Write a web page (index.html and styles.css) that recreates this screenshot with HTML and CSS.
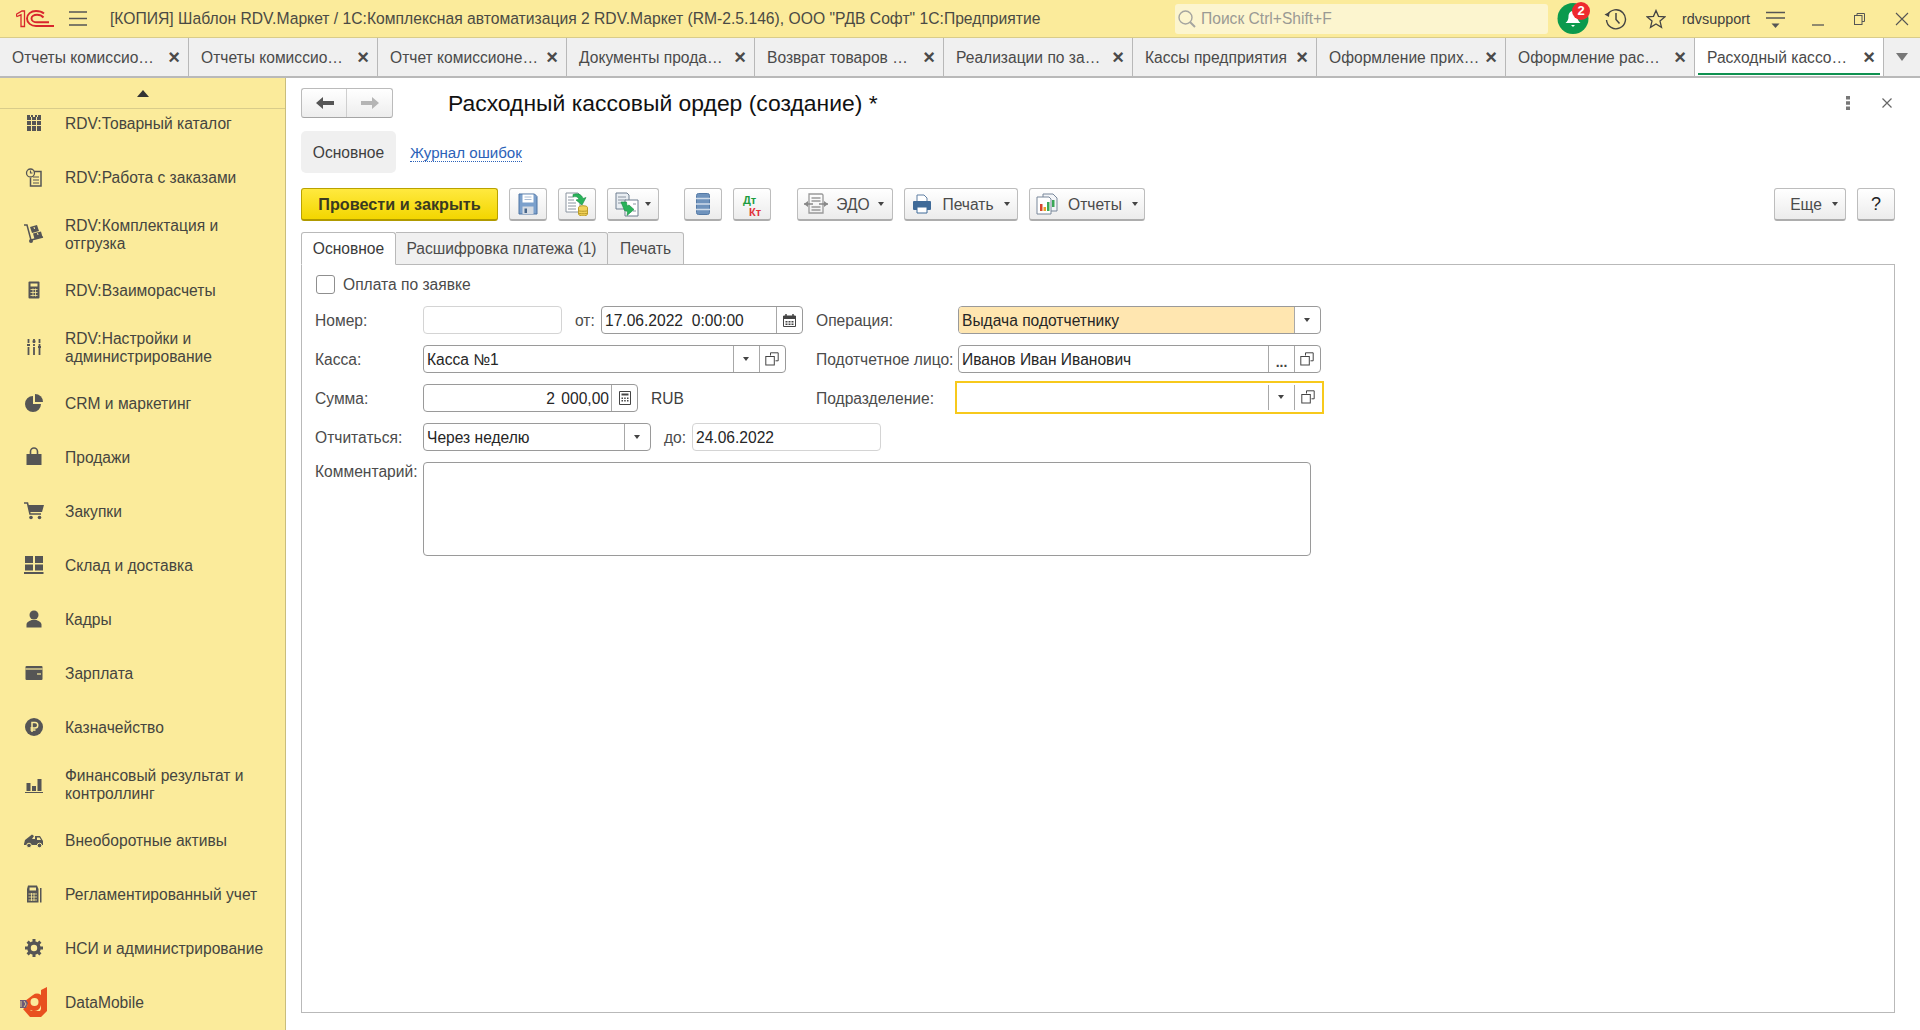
FILE: index.html
```html
<!DOCTYPE html>
<html lang="ru">
<head>
<meta charset="utf-8">
<title>Расходный кассовый ордер</title>
<link rel="stylesheet" href="styles.css">
</head>
<body>
<svg class="defs" width="0" height="0">
  <symbol id="open" viewBox="0 0 14 14"><path d="M5.500 3.500V.8h7.700v8h-2.700" fill="none" stroke="#444"/><rect x=".8" y="4.500" width="8.500" height="8.500" fill="none" stroke="#444"/></symbol>
</svg>
<header class="topbar">
  <svg class="logo" width="38" height="18" viewBox="0 0 38 18"><path d="M0 4.500L6 1h2.500v15.500H5V4.800L1 6.500z" fill="none" stroke="#d8262c" stroke-width="1.300"/><path d="M28 3.500C26 1.800 23 1 20 1c-5 0-9 3.200-9 7.500S15 16 20 16h18" fill="none" stroke="#d8262c" stroke-width="1.900"/><path d="M27.500 7.500C26 5.800 23.500 4.800 21 4.800c-3 0-5.500 1.600-5.500 3.700s2.500 3.800 5.500 3.800h12" fill="none" stroke="#d8262c" stroke-width="1.900"/></svg>
  <svg class="burger" width="18" height="15" viewBox="0 0 18 15"><path d="M0 1h18M0 7.500h18M0 14h18" stroke="#555" stroke-width="1.300"/></svg>
  <div class="apptitle">[КОПИЯ] Шаблон RDV.Маркет / 1С:Комплексная автоматизация 2 RDV.Маркет (RM-2.5.146), ООО "РДВ Софт" 1С:Предприятие</div>
  <div class="search">
    <svg width="20" height="20" viewBox="0 0 20 20"><circle cx="8.500" cy="8.500" r="6.500" fill="none" stroke="#a5a5a0" stroke-width="1.400"/><path d="M13 13l5 5" stroke="#a5a5a0" stroke-width="2"/></svg>
    <span>Поиск Ctrl+Shift+F</span>
  </div>
  <div class="bell">
    <svg width="32" height="31" viewBox="0 0 32 31"><circle cx="16" cy="15.500" r="15.500" fill="#0b9a4d"/><path d="M16 8c-3 0-4.500 2.500-4.500 5.500 0 3-1 5-3 6.500h15c-2-1.500-3-3.500-3-6.500C20.500 10.500 19 8 16 8z" fill="#fff"/><path d="M14 22h4l-2 2z" fill="#fff"/></svg>
    <span class="badge">2</span>
  </div>
  <svg class="tool-history" width="24" height="22" viewBox="0 0 24 22"><path d="M4.500 7A9.500 9.500 0 1 1 3.500 12" fill="none" stroke="#444" stroke-width="1.400"/><path d="M1.500 6.500l4.500 2.500.5-5z" fill="#444"/><path d="M13 5v6.500l3.500 4" fill="none" stroke="#444" stroke-width="1.500"/></svg>
  <svg class="tool-star" width="20" height="20" viewBox="0 0 20 20"><path d="M10 1.500l2.500 5.800 6.300.6-4.800 4.200 1.500 6.200L10 15l-5.500 3.300L6 12.100 1.200 7.900l6.300-.6z" fill="none" stroke="#444" stroke-width="1.300"/></svg>
  <div class="username">rdvsupport</div>
  <svg class="tool-funcs" width="19" height="19" viewBox="0 0 19 19"><path d="M0 1.500h19M0 7h19" stroke="#555" stroke-width="1.300"/><path d="M5.500 12.500h8l-4 4.500z" fill="#555"/></svg>
  <div class="winctl">
    <svg width="12" height="12" viewBox="0 0 12 12"><path d="M0 11h12" stroke="#555" stroke-width="1.300"/></svg>
    <svg width="11" height="12" viewBox="0 0 11 12"><rect x=".5" y="2.500" width="7.500" height="9" fill="none" stroke="#555"/><path d="M3 2.500V.5h7.500v8H8" fill="none" stroke="#555"/></svg>
    <svg width="14" height="14" viewBox="0 0 14 14"><path d="M1 1l12 12M13 1L1 13" stroke="#555" stroke-width="1.100"/></svg>
  </div>
</header>
<nav class="tabstrip">
  <div class="wtab"><span>Отчеты комиссио…</span><i>×</i></div>
  <div class="wtab"><span>Отчеты комиссио…</span><i>×</i></div>
  <div class="wtab"><span>Отчет комиссионе…</span><i>×</i></div>
  <div class="wtab wtab-short"><span>Документы прода…</span><i>×</i></div>
  <div class="wtab"><span>Возврат товаров …</span><i>×</i></div>
  <div class="wtab"><span>Реализации по за…</span><i>×</i></div>
  <div class="wtab wtab-narrow"><span>Кассы предприятия</span><i>×</i></div>
  <div class="wtab"><span>Оформление прих…</span><i>×</i></div>
  <div class="wtab"><span>Оформление рас…</span><i>×</i></div>
  <div class="wtab wtab-active"><span>Расходный кассо…</span><i>×</i></div>
  <div class="tabmore"><b class="more-arrow"></b></div>
</nav>
<div class="main">
  <aside class="sidebar">
    <div class="side-up"><b class="up-arrow"></b></div>
    <div class="side-scroll">
      <ul class="side-list">
        <li class="side-item"><svg viewBox="0 0 20 20" width="20" height="20"><path d="M3 2h3v2h1V2h2v2h2V2h2v2h1V2h3v16H3z" fill="#555"/><path d="M3 7.500h14M3 12.500h14M7.500 4v14M12.500 4v14" stroke="#fbeb9b" stroke-width="1"/></svg><span>RDV:Товарный каталог</span></li>
        <li class="side-item"><svg viewBox="0 0 20 20" width="20" height="20"><path d="M7 4.500h10v14.500H6.500v-8" fill="none" stroke="#555" stroke-width="1.500"/><circle cx="6.500" cy="6" r="4" fill="#fbeb9b" stroke="#555" stroke-width="1.300"/><path d="M6.500 3.500V6h2M9 10h6M9 13h6M9 16h6" fill="none" stroke="#555" stroke-width="1.200"/></svg><span>RDV:Работа с заказами</span></li>
        <li class="side-item"><svg viewBox="0 0 20 20" width="20" height="20"><path d="M0 1h3l4 15 12-3" fill="none" stroke="#555" stroke-width="1.500"/><circle cx="7" cy="17" r="2" fill="#555"/><path d="M6 3l7-2 2 6-7 2zM9 9.500l8-2 1.500 5.500-8 2z" fill="#555"/><path d="M10 3l.5 2M13.500 9l.5 2" stroke="#fbeb9b"/></svg><span>RDV:Комплектация и<br>отгрузка</span></li>
        <li class="side-item"><svg viewBox="0 0 20 20" width="20" height="20"><path d="M4.500 2.500q0-1 1-1h9q1 0 1 1v15q0 1-1 1h-9q-1 0-1-1z" fill="#555"/><path d="M6.500 3.500h7v3h-7z" fill="#fbeb9b"/><path d="M6.500 9.500h7M6.500 12.500h7M6.500 15.500h7M9 8.500v8M11.500 8.500v8" stroke="#fbeb9b" stroke-width=".8"/></svg><span>RDV:Взаиморасчеты</span></li>
        <li class="side-item"><svg viewBox="0 0 20 20" width="20" height="20"><path d="M4.500 2v16M10 2v16M15.500 2v16" stroke="#555" stroke-width="1.800" stroke-dasharray="4 1 2 1 10"/><path d="M3 8h3M8.500 4.500h3M14 10h3" stroke="#555" stroke-width="2"/></svg><span>RDV:Настройки и<br>администрирование</span></li>
        <li class="side-item"><svg viewBox="0 0 20 20" width="20" height="20"><path d="M9 3a8 8 0 1 0 8 8H9z" fill="#555"/><path d="M11 1a8 8 0 0 1 8 8h-8z" fill="#555"/></svg><span>CRM и маркетинг</span></li>
        <li class="side-item"><svg viewBox="0 0 20 20" width="20" height="20"><path d="M2.500 7h15v11h-15z" fill="#555"/><path d="M6.500 7V4.500a3.500 3.500 0 0 1 7 0V7" fill="none" stroke="#555" stroke-width="1.600"/></svg><span>Продажи</span></li>
        <li class="side-item"><svg viewBox="0 0 20 20" width="20" height="20"><path d="M0 2h3.500l2.500 11h11" fill="none" stroke="#555" stroke-width="1.600"/><path d="M4 4h16l-2 7H5.500z" fill="#555"/><circle cx="7" cy="16.500" r="1.800" fill="#555"/><circle cx="15.500" cy="16.500" r="1.800" fill="#555"/></svg><span>Закупки</span></li>
        <li class="side-item"><svg viewBox="0 0 20 20" width="20" height="20"><path d="M1 1h8v7H1zM11 1h8v7h-8zM1 9.500h8v6H1zM11 9.500h8v6h-8zM0 17h19.500v2H0z" fill="#555"/></svg><span>Склад и доставка</span></li>
        <li class="side-item"><svg viewBox="0 0 20 20" width="20" height="20"><circle cx="10" cy="6" r="4.500" fill="#555"/><path d="M2.500 18.500v-3c0-2.500 3-3.500 5-4.500h5c2 1 5 2 5 4.500v3z" fill="#555"/></svg><span>Кадры</span></li>
        <li class="side-item"><svg viewBox="0 0 20 20" width="20" height="20"><path d="M1.500 4q0-1 1-1h15q1 0 1 1v12q0 1-1 1h-15q-1 0-1-1z" fill="#555"/><path d="M1.500 6h17" stroke="#fbeb9b" stroke-width="1.200"/><path d="M13 11h4" stroke="#fbeb9b" stroke-width="1.200"/></svg><span>Зарплата</span></li>
        <li class="side-item"><svg viewBox="0 0 20 20" width="20" height="20"><circle cx="10" cy="10" r="9" fill="#555"/><path d="M8 15V5.500h3a2.500 2.500 0 0 1 0 5.500H6.500M6.500 13h5" fill="none" stroke="#fbeb9b" stroke-width="1.500"/></svg><span>Казначейство</span></li>
        <li class="side-item"><svg viewBox="0 0 20 20" width="20" height="20"><path d="M2.500 9h4v8h-4zM8 12h4v5H8zM13.500 5h4v12h-4zM1 18h18v1H1z" fill="#555"/></svg><span>Финансовый результат и<br>контроллинг</span></li>
        <li class="side-item"><svg viewBox="0 0 20 20" width="20" height="20"><path d="M0 14l1-4 7-5.500 2 1.500-2 3h3V6h5l3 5v4H0z" fill="#555"/><circle cx="5" cy="15.500" r="2.300" fill="#555" stroke="#fbeb9b"/><circle cx="15.500" cy="15.500" r="2.300" fill="#555" stroke="#fbeb9b"/><path d="M13 7.500h2.500l1.500 2.500h-4z" fill="#fbeb9b"/></svg><span>Внеоборотные активы</span></li>
        <li class="side-item"><svg viewBox="0 0 20 20" width="20" height="20"><path d="M3 5l1-3.500h9L14.500 5v13.500H3z" fill="#555"/><path d="M16 4h1.500v14.500H16z" fill="#555"/><path d="M5.500 3.500h6.500v3H5.500z" fill="#fbeb9b"/><path d="M4.500 10h8.500M4.500 13h8.500M4.500 16h8.500M7.500 9v8M10 9v8" stroke="#fbeb9b" stroke-width=".8"/></svg><span>Регламентированный учет</span></li>
        <li class="side-item"><svg viewBox="0 0 20 20" width="20" height="20"><circle cx="10" cy="10" r="5" fill="none" stroke="#555" stroke-width="3.600"/><path d="M10 1v4M10 15v4M1 10h4M15 10h4M3.600 3.600l2.800 2.800M13.600 13.600l2.800 2.800M16.400 3.600l-2.800 2.800M6.400 13.600l-2.800 2.800" stroke="#555" stroke-width="3"/></svg><span>НСИ и администрирование</span></li>
        <li class="side-item side-item-logo"><svg viewBox="0 0 30 32" width="30" height="32"><path d="M28 1v24l-6 6H11L4 23l4-3 4 5h9l1-2v-4a7 7 0 0 1-14-2l-2-2 8-6a7 7 0 0 1 8 0V4z" fill="#e8501f"/><circle cx="15.500" cy="16" r="4" fill="#fbeb9b"/><path d="M1 14h6l2 3-2 5H1z" fill="#6c5a78"/><path d="M2 15v6M5 15l2 3-2 3" stroke="#fbeb9b" stroke-width=".8" fill="none"/></svg><span>DataMobile</span></li>
      </ul>
    </div>
  </aside>
  <main class="content">
    <div class="formhead">
      <div class="navbtns">
        <button class="navbtn"><svg width="20" height="14" viewBox="0 0 20 14"><path d="M1 7l7-6v4h11v4H8v4z" fill="#555"/></svg></button>
        <button class="navbtn"><svg width="20" height="14" viewBox="0 0 20 14"><path d="M19 7l-7-6v4H1v4h11v4z" fill="#b5b5b5"/></svg></button>
      </div>
      <h1 class="formtitle">Расходный кассовый ордер (создание) *</h1>
      <svg class="formdots" width="4" height="14" viewBox="0 0 4 14"><path d="M0 0h4v3.500H0zM0 5.200h4v3.500H0zM0 10.500h4V14H0z" fill="#777"/></svg>
      <svg class="formclose" width="10" height="10" viewBox="0 0 10 10"><path d="M.5.500l9 9M9.500.500l-9 9" stroke="#666" stroke-width="1.200"/></svg>
    </div>
    <div class="sections">
      <div class="section section-active">Основное</div>
      <a class="section-link">Журнал ошибок</a>
    </div>
    <div class="toolbar">
      <button class="tb tb-primary">Провести и закрыть</button>
      <button class="tb tb-icon"><svg width="20" height="22" viewBox="0 0 20 22"><path d="M1 1h15.500L19 3.500V21H1z" fill="#7ba0cc" stroke="#4f74a3"/><path d="M4.500 1.500h11v8h-11z" fill="#fff"/><path d="M6.500 4h7M6.500 6.500h7" stroke="#a9bcd4"/><path d="M4.500 13.500h11V21h-11z" fill="#d5dbe3"/><path d="M6.500 15.500H9V20H6.500z" fill="#47668a"/></svg></button>
      <button class="tb tb-icon"><svg width="24" height="24" viewBox="0 0 24 24"><path d="M1 1h12l2 2v17H1z" fill="#fff" stroke="#8a94a0"/><path d="M3 5h5M3 8h6M3 11h8M3 14h8M3 17h8" stroke="#8a94a0"/><path d="M8 2.500c5-2 9 .5 10 4l3-1-4 7.500-6-5 3-.8C13 5 11 4 8 5z" fill="#29b35a" stroke="#178c42" stroke-width=".6"/><ellipse cx="18" cy="15.500" rx="4.500" ry="1.800" fill="#f2d25a" stroke="#b99c2a"/><path d="M13.500 15.500v6.500c0 1 2 2 4.500 2s4.500-1 4.500-2v-6.500" fill="#f2d25a" stroke="#b99c2a"/><path d="M13.500 18.500c0 1 9 1 9 0M13.500 21c0 1 9 1 9 0" fill="none" stroke="#b99c2a"/></svg></button>
      <button class="tb tb-iconmenu"><svg width="24" height="25" viewBox="0 0 24 25"><path d="M1 1h11l2 2v14H1z" fill="#e8edf2" stroke="#6f7f90"/><path d="M3 5h8M3 8h8M3 11h4" stroke="#8a94a0"/><path d="M10 8h13v16H10z" fill="#fff" stroke="#6f7f90"/><path d="M18 12h3M18 19h3" stroke="#8a94a0"/><path d="M6 10h5.500l.5 4 2-1 5 4.500-7 6 .5-4-3-1z" fill="#29b35a" stroke="#178c42" stroke-width=".6"/></svg><b class="caret"></b></button>
      <button class="tb tb-icon tb-gap"><svg width="14" height="22" viewBox="0 0 14 22"><rect x=".5" y=".5" width="13" height="21" rx="2" fill="#6f93bd" stroke="#557aa6"/><path d="M0 5.500h14M0 11h14M0 16.500h14" stroke="#cfdcea" stroke-width="1.300"/></svg></button>
      <button class="tb tb-icon tb-dtkt"><span class="dt">Дт</span><span class="kt">Кт</span></button>
      <button class="tb tb-menu tb-edo"><svg width="24" height="22" viewBox="0 0 24 22"><path d="M5 1h13l1 1v18H5z" fill="none" stroke="#999" stroke-width="1.300"/><path d="M7.500 5h9M7.500 8h9M7.500 14h9M7.500 17h9" stroke="#999" stroke-width="1.300"/><path d="M0 11h9M15 11h9" stroke="#888" stroke-width="1.600"/><path d="M0 11l4-3v6zM24 11l-4-3v6z" fill="#888"/></svg><span>ЭДО</span><b class="caret"></b></button>
      <button class="tb tb-menu tb-print"><svg width="20" height="20" viewBox="0 0 20 20"><path d="M5 1h7l3 3v5H5z" fill="#fff" stroke="#5f7fa3"/><path d="M1 8q0-1 1-1h16q1 0 1 1v7q0 1-1 1h-3v-3H5v3H2q-1 0-1-1z" fill="#3f6a98"/><path d="M5 13h10v6H5z" fill="#fff" stroke="#3f6a98"/></svg><span>Печать</span><b class="caret"></b></button>
      <button class="tb tb-menu tb-reports"><svg width="22" height="22" viewBox="0 0 22 22"><path d="M7 1h10l4 4v13H7z" fill="#f3f5f8" stroke="#78879a"/><path d="M1 4h12l2 2v15H1z" fill="#fff" stroke="#78879a"/><path d="M4 11h2.500v7H4z" fill="#d8452e"/><path d="M7.500 14H10v4H7.500z" fill="#e8a32a"/><path d="M11 9h2.500v9H11z" fill="#3aa757"/><path d="M16 7h2.500v7H16z" fill="#3aa757"/></svg><span>Отчеты</span><b class="caret"></b></button>
      <div class="tb-spacer"></div>
      <button class="tb tb-menu tb-more"><span>Еще</span><b class="caret"></b></button>
      <button class="tb tb-help">?</button>
    </div>
    <div class="formtabs">
      <div class="ftab ftab-active">Основное</div>
      <div class="ftab ftab-pay">Расшифровка платежа (1)</div>
      <div class="ftab ftab-print">Печать</div>
    </div>
    <section class="panel">
      <label class="check"><span class="box"></span><span>Оплата по заявке</span></label>
      <div class="grid3">
        <div class="cell">
          <span class="lab">Номер:</span>
          <div class="field field-plain f-num"></div>
          <span class="lab-in lab-ot">от:</span>
          <div class="field f-date"><div class="val">17.06.2022&nbsp; 0:00:00</div><div class="fbtn"><svg width="13" height="13" viewBox="0 0 13 13"><path d="M.5 2h12v10.500H.5z" fill="none" stroke="#444"/><path d="M.5 2h12v3H.5z" fill="#444"/><path d="M3 0v3M10 0v3" stroke="#444" stroke-width="1.500"/><path d="M2.500 7h2v1.500h-2zM5.500 7h2v1.500h-2zM8.500 7h2v1.500h-2zM2.500 9.500h2V11h-2zM5.500 9.500h2V11h-2zM8.500 9.500h2V11h-2z" fill="#444"/></svg></div></div>
        </div>
        <span class="lab-r">Операция:</span>
        <div class="field f-op"><div class="val">Выдача подотчетнику</div><div class="fbtn"><b class="caret"></b></div></div>

        <div class="cell">
          <span class="lab">Касса:</span>
          <div class="field f-kassa"><div class="val">Касса №1</div><div class="fbtn"><b class="caret"></b></div><div class="fbtn fbtn-open"><svg width="14" height="14"><use href="#open"/></svg></div></div>
        </div>
        <span class="lab-r">Подотчетное лицо:</span>
        <div class="field"><div class="val">Иванов Иван Иванович</div><div class="fbtn fbtn-dots">...</div><div class="fbtn fbtn-open"><svg width="14" height="14"><use href="#open"/></svg></div></div>

        <div class="cell">
          <span class="lab">Сумма:</span>
          <div class="field f-sum"><div class="val val-r">2 000,00</div><div class="fbtn"><svg width="12" height="14" viewBox="0 0 12 14"><path d="M.5.500h11v13H.5z" fill="none" stroke="#444"/><path d="M2.500 2.500h7v2h-7z" fill="#444"/><path d="M2.500 6.500h1.500v1.500H2.500zM5.200 6.500h1.500v1.500H5.200zM8 6.500h1.500v1.500H8zM2.500 9h1.500v1.500H2.500zM5.200 9h1.500v1.500H5.200zM8 9h1.500v1.500H8z" fill="#444"/></svg></div></div>
          <span class="cur">RUB</span>
        </div>
        <span class="lab-r">Подразделение:</span>
        <div class="field f-focus"><div class="val"></div><div class="fbtn"><b class="caret"></b></div><div class="fbtn fbtn-open"><svg width="14" height="14"><use href="#open"/></svg></div></div>
      </div>
      <div class="row row-report">
        <span class="lab">Отчитаться:</span>
        <div class="field f-term"><div class="val">Через неделю</div><div class="fbtn"><b class="caret"></b></div></div>
        <span class="lab-in lab-do">до:</span>
        <div class="field field-plain f-till"><div class="val">24.06.2022</div></div>
      </div>
      <div class="row row-comment">
        <span class="lab">Комментарий:</span>
        <div class="field f-comment"></div>
      </div>
    </section>
  </main>
</div>
</body>
</html>
```

FILE: styles.css
```css
* { box-sizing: border-box; }
html, body { margin: 0; height: 100%; }
body {
  width: 1920px; height: 1030px; overflow: hidden;
  display: flex; flex-direction: column;
  font: 15.6px/18px "Liberation Sans", Arial, sans-serif;
  color: #4b4b4b; background: #fff;
}
.defs { display: none; }
button { font: inherit; color: inherit; padding: 0; }
ul { list-style: none; margin: 0; padding: 0; }

/* top bar */
.topbar {
  height: 38px; flex: none; display: flex; align-items: center;
  background: #fbeb9b; border-bottom: 1px solid #d9cc8a;
}
.logo { margin-left: 16px; }
.burger { margin-left: 15px; }
.apptitle { margin-left: 23px; width: 1065px; color: #4a4a44; white-space: nowrap; font-size: 15.68px; }
.search {
  width: 373px; height: 30px; display: flex; align-items: center; gap: 4px;
  padding-left: 2px; background: #fcf5cf; border-radius: 3px; color: #9a9a94;
}
.bell { position: relative; width: 32px; height: 31px; margin-left: 9px; }
.bell svg { display: block; }
.badge {
  position: absolute; left: 15px; top: -1px; width: 18px; height: 18px; border-radius: 50%;
  background: #ee2a2e; color: #fff; font: bold 13px/18px "Liberation Sans", sans-serif; text-align: center;
}
.tool-history { margin-left: 14px; }
.tool-star { margin-left: 19px; }
.username { margin-left: 16px; font-size: 14.4px; color: #3f3f3f; width: 84px; white-space: nowrap; }
.tool-funcs { margin-top: 4px; }
.winctl { margin-left: 27px; display: flex; align-items: center; gap: 30px; }
.winctl svg:first-child { margin-top: 2px; }

/* window tabs */
.tabstrip {
  height: 40px; flex: none; display: flex;
  background: #f0f0f0; border-bottom: 2px solid #b9b9b9;
}
.wtab {
  width: 189px; display: flex; align-items: center; justify-content: space-between;
  padding: 0 8px 0 12px; border-right: 1px solid #b8b8b8; white-space: nowrap;
  color: #4a4a4a; position: relative;
}
.wtab span { margin-top: 2px; }
.wtab-short { width: 188px; }
.wtab-narrow { width: 184px; }
.wtab i { font: bold 20px/18px "Liberation Sans", sans-serif; color: #4a4a4a; }
.wtab-active { background: #fff; }
.wtab-active::after {
  content: ""; position: absolute; left: 3px; right: 3px; bottom: 1px; height: 2px; background: #0f9150;
}
.tabmore { flex: 1; display: flex; align-items: center; justify-content: center; }
.more-arrow { border: 6px solid transparent; border-top: 8px solid #777; border-bottom: 0; }

/* layout */
.main { flex: 1; display: flex; min-height: 0; }

/* sidebar */
.sidebar {
  width: 286px; flex: none; display: flex; flex-direction: column;
  background: #fbeb9b; border-right: 1px solid #c9bd7d;
}
.side-up {
  height: 31px; flex: none; display: flex; align-items: center; justify-content: center;
  border-bottom: 1px solid #d9cc8a;
}
.up-arrow { border: 6px solid transparent; border-bottom: 7px solid #333; border-top: 0; }
.side-scroll { flex: 1; overflow: hidden; }
.side-list { margin-top: -13px; }
.side-item {
  height: 54px; display: flex; align-items: center; gap: 21px; padding-left: 24px; color: #454540;
}
.side-item span { margin-top: 2px; }
.side-item:nth-child(3), .side-item:nth-child(5), .side-item:nth-child(13) { height: 59px; }
.side-item svg { flex: none; }
.side-item-logo { gap: 16px; padding-left: 19px; }

/* form */
.content { flex: 1; min-width: 0; display: flex; flex-direction: column; padding: 10px 25px 17px 15px; }
.formhead { height: 30px; flex: none; display: flex; align-items: center; }
.navbtns { display: flex; width: 92px; height: 30px; }
.navbtn {
  flex: 1; display: flex; align-items: center; justify-content: center;
  background: linear-gradient(#fff, #ededed); border: 1px solid #bbb; border-bottom-color: #a5a5a5;
}
.navbtn:first-child { border-radius: 3px 0 0 3px; border-right: 0; box-shadow: inset -1px 0 0 #cfcfcf; }
.navbtn:last-child { border-radius: 0 3px 3px 0; border-left: 0; }
.formtitle { margin: 0 0 0 55px; font-size: 22.9px; line-height: 30px; font-weight: normal; color: #111; white-space: nowrap; flex: 1; }
.formdots { margin-right: 32px; }
.formclose { margin-right: 3px; }

.sections { height: 42px; margin-top: 13px; flex: none; display: flex; align-items: center; }
.section { height: 42px; line-height: 44px; background: #f0f0f0; border-radius: 5px; width: 95px; text-align: center; color: #3f3f3f; }
.section-link { margin: 2px 0 0 14px; color: #2c62b8; border-bottom: 1px dotted #2c62b8; line-height: 17px; font-size: 15.1px; }

.toolbar { height: 33px; margin-top: 15px; flex: none; display: flex; }
.tb {
  height: 33px; display: flex; align-items: center; justify-content: center; gap: 8px; flex: none;
  background: linear-gradient(#fff, #ececec); border: 1px solid #bdbdbd; border-bottom: 2px solid #adadad;
  border-radius: 3px; color: #4b4b4b; margin-right: 11px;
}
.tb-primary {
  width: 197px; font-weight: bold; font-size: 16.2px; color: #3a3a20; white-space: nowrap;
  background: linear-gradient(#ffe93f, #f3d600); border: 1px solid #b9a200; border-bottom: 2px solid #b09a00;
}
.tb-icon { width: 38px; }
.tb-iconmenu { width: 52px; gap: 6px; }
.tb-gap { margin-left: 14px; }
.tb-dtkt { display: block; padding: 0; font: bold 11px/11px "Liberation Sans", sans-serif; margin-right: 26px; }
.dt { display: block; color: #1c9c3e; margin: 4px 0 0 9px; text-align: left; }
.kt { display: block; color: #e0323a; margin: 1px 0 0 15px; text-align: left; }
.tb-menu { gap: 10px; }
.tb-menu span { margin-top: 2px; }
.tb-edo { width: 96px; gap: 8px; padding-right: 2px; }
.tb-print { width: 114px; }
.tb-reports { width: 116px; margin-right: 0; }
.tb-spacer { flex: 1; }
.tb-more { width: 72px; padding-left: 8px; }
.tb-help { width: 38px; margin-right: 0; font-size: 18px; font-weight: normal; color: #222; }
.caret { display: inline-block; border: 3.500px solid transparent; border-top: 4px solid #444; border-bottom: 0; }

.formtabs { height: 33px; margin-top: 11px; flex: none; display: flex; position: relative; z-index: 1; margin-bottom: -1px; }
.ftab {
  height: 33px; line-height: 31px; text-align: center; background: #f0f0f0; color: #4b4b4b; white-space: nowrap;
  border: 1px solid #b9b9b9; border-left: 0; border-radius: 0 3px 0 0;
}
.ftab-active { width: 95px; background: #fff; border-left: 1px solid #b9b9b9; border-bottom-color: #fff; border-radius: 3px 3px 0 0; color: #3a3a3a; }
.ftab-pay { width: 212px; }
.ftab-print { width: 76px; }

.panel { flex: 1; min-height: 0; border: 1px solid #b9b9b9; padding: 10px 0 0 14px; }
.check { display: flex; align-items: center; gap: 8px; height: 19px; color: #4b4b4b; }
.box { width: 19px; height: 19px; background: #fff; border: 1px solid #8f8f8f; border-radius: 3px; }
.grid3 { display: grid; grid-template-columns: 500px 142px 363px; grid-auto-rows: 28px; row-gap: 11px; margin-top: 12px; align-items: center; }
.cell { display: flex; align-items: center; }
.lab { width: 108px; margin-left: -1px; flex: none; white-space: nowrap; }
.cell .lab, .row-report .lab { margin-top: 2px; }
.lab-r { white-space: nowrap; margin-top: 2px; }
.lab-in { flex: none; margin-top: 2px; }
.lab-ot { margin-left: 13px; width: 26px; }
.lab-do { margin-left: 13px; width: 28px; }
.cur { margin: 2px 0 0 13px; color: #3f3f3f; }
.field {
  height: 28px; display: flex; background: #fff; border: 1px solid #9a9a9a; border-radius: 4px;
  color: #262626; flex: none;
}
.field-plain { border-color: #d4d4d4; }
.val { flex: 1; min-width: 0; line-height: 28px; padding: 0 3px; white-space: nowrap; }
.val-r { text-align: right; padding-right: 2px; word-spacing: 2px; }
.fbtn { width: 26px; flex: none; display: flex; align-items: center; justify-content: center; border-left: 1px solid #a8a8a8; }
.fbtn .caret { margin-right: 2px; }
.fbtn-open svg { margin-right: 2px; }
.fbtn-dots { font-weight: bold; line-height: 32px; color: #444; align-items: flex-start; font-size: 14px; }
.f-num { width: 139px; }
.f-date { width: 202px; }
.f-kassa { width: 363px; }
.f-sum { width: 215px; }
.f-op .val { background: #ffe6b0; border-radius: 3px 0 0 3px; }
.f-focus { height: 33px; margin: -2px -3px 0 -3px; border: 2px solid #f7c91c; border-radius: 0; }
.f-focus .fbtn { margin: 2px 0; }
.f-focus .fbtn-open { width: 28px; }
.row { display: flex; align-items: flex-start; }
.row-report { margin-top: 11px; align-items: center; }
.f-term { width: 228px; }
.f-till { width: 189px; }
.row-comment { margin-top: 11px; }
.row-comment .lab { padding-top: 1px; }
.f-comment { width: 888px; height: 94px; }
```
